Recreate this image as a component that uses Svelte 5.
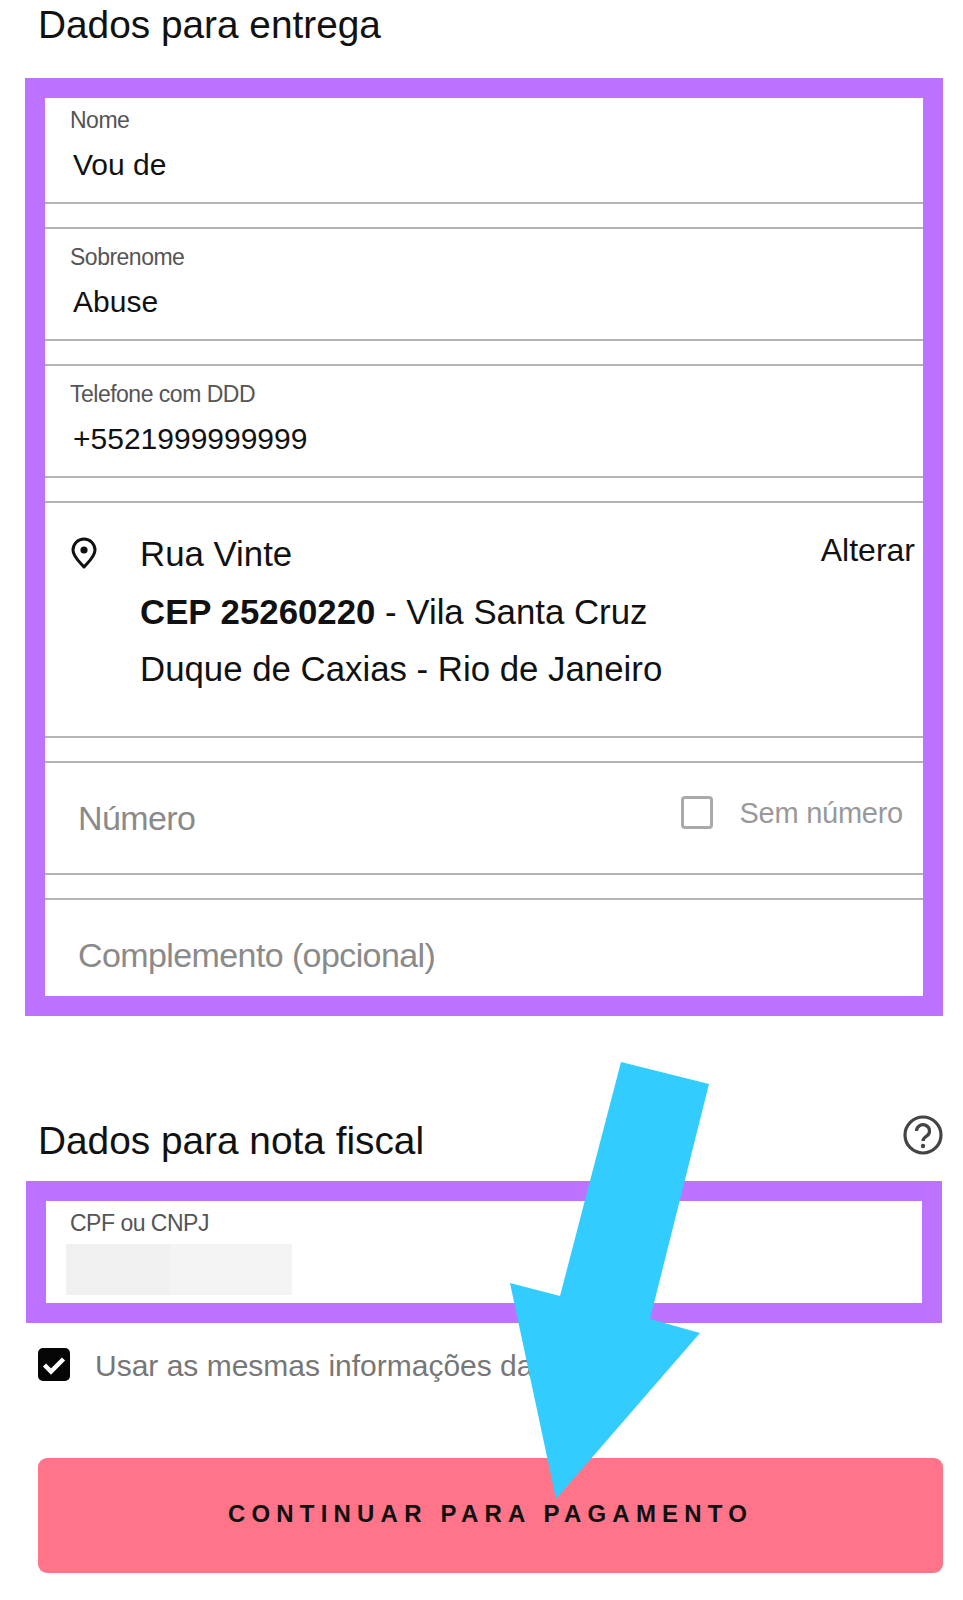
<script>
    const fields = [
        { label: "Nome", value: "Vou de" },
        { label: "Sobrenome", value: "Abuse" },
        { label: "Telefone com DDD", value: "+5521999999999" }
    ];
</script>

<div class="page">
    <h2 class="title">Dados para entrega</h2>

    <div class="box delivery">
        {#each fields as f, i}
            <div class="field" class:first={i === 0}>
                <span class="label">{f.label}</span>
                <span class="value">{f.value}</span>
            </div>
        {/each}

        <div class="field address">
            <svg class="pin" viewBox="0 0 26 32" width="26" height="32">
                <path d="M13 30 C9 25 2 20 2 13 A11 11 0 0 1 24 13 C24 20 17 25 13 30 Z" fill="none" stroke="#111" stroke-width="3" stroke-linejoin="round" />
                <circle cx="13" cy="13" r="3.6" fill="#111" />
            </svg>
            <div class="lines">
                <div>Rua Vinte</div>
                <div><b>CEP 25260220</b> - Vila Santa Cruz</div>
                <div>Duque de Caxias - Rio de Janeiro</div>
            </div>
            <span class="change">Alterar</span>
        </div>

        <div class="field number">
            <span class="placeholder">Número</span>
            <div class="no-number">
                <span class="empty-check"></span>
                <span>Sem número</span>
            </div>
        </div>

        <div class="field last">
            <span class="placeholder">Complemento (opcional)</span>
        </div>
    </div>

    <div class="fiscal-head">
        <h2 class="title">Dados para nota fiscal</h2>
        <svg class="help" viewBox="0 0 40 40" width="40" height="40">
            <circle cx="20" cy="20" r="18" fill="none" stroke="#444" stroke-width="3.2" />
            <path d="M13.5 16 A6.5 6.2 0 1 1 23.5 21.2 C21 22.8 20 23.6 20 26" fill="none" stroke="#444" stroke-width="3.2" />
            <circle cx="20" cy="31" r="2.2" fill="#444" />
        </svg>
    </div>

    <div class="box cpf">
        <span class="label">CPF ou CNPJ</span>
        <div class="redacted">
            <span class="shade-a"></span>
            <span class="shade-b"></span>
        </div>
    </div>

    <div class="same">
        <svg class="check" viewBox="0 0 32 33" width="32" height="33">
            <rect width="32" height="33" rx="5" fill="#050505" />
            <path d="M6.5 17 L13 23.5 L25.5 11" fill="none" stroke="#fff" stroke-width="4.5" />
        </svg>
        <span>Usar as mesmas informações da</span>
    </div>

    <button class="continue">CONTINUAR PARA PAGAMENTO</button>

    <svg class="arrow" viewBox="0 0 963 1600" width="963" height="1600">
        <polygon points="621,1062 709,1084 650,1319 700,1333 556,1499 510,1283 560,1296" fill="#33ccff" />
    </svg>
</div>

<style>
    :global(body) {
        margin: 0;
        background: #fff;
    }

    .page {
        position: relative;
        width: 963px;
        height: 1600px;
        overflow: hidden;
        font-family: "Liberation Sans", Arial, sans-serif;
        color: #111;
    }

    .title {
        margin: 0;
        padding: 2px 0 0 38px;
        font-size: 38.8px;
        line-height: 46px;
        font-weight: 400;
        color: #111;
    }

    .box {
        box-sizing: border-box;
        border: 20px solid #bd73ff;
    }

    .delivery {
        width: 918px;
        height: 938px;
        margin: 30px 0 0 25px;
        display: flex;
        flex-direction: column;
        gap: 23px;
        overflow: hidden;
    }

    .field {
        box-sizing: border-box;
        height: 114px;
        flex: none;
        display: flex;
        flex-direction: column;
        padding: 15px 0 0 25px;
        border-top: 2px solid #b4b4b4;
        border-bottom: 2px solid #b4b4b4;
    }

    .field.first {
        height: 106px;
        padding-top: 9px;
        border-top: 0;
    }

    .field.last {
        border-bottom: 0;
        height: 98px;
        padding: 33px 0 0 33px;
    }

    .label {
        font-size: 23px;
        line-height: 26px;
        letter-spacing: -0.5px;
        color: #555;
    }

    .value {
        margin: 14px 0 0 3px;
        font-size: 30px;
        line-height: 36px;
        color: #111;
    }

    .address {
        height: 237px;
        flex-direction: row;
        align-items: flex-start;
        padding: 34px 8px 0 26px;
    }

    .pin {
        flex: none;
    }

    .lines {
        flex: 1;
        margin: -12px 0 0 43px;
        font-size: 34.8px;
        line-height: 57.6px;
        color: #111;
    }

    .change {
        font-size: 32px;
        line-height: 36px;
        margin-top: -5px;
    }

    .number {
        flex-direction: row;
        justify-content: space-between;
        padding: 33px 20px 0 33px;
    }

    .placeholder {
        font-size: 34px;
        line-height: 44px;
        letter-spacing: -0.6px;
        color: #8a8a8a;
    }

    .no-number {
        display: flex;
        align-items: center;
        gap: 26px;
        height: 33px;
        font-size: 29px;
        letter-spacing: -0.25px;
        color: #999;
    }

    .no-number span:last-child {
        padding-top: 2px;
    }

    .empty-check {
        box-sizing: border-box;
        width: 32px;
        height: 33px;
        border: 3px solid #aaa;
        border-radius: 4px;
    }

    .fiscal-head {
        display: flex;
        justify-content: space-between;
        align-items: flex-start;
        margin-top: 97px;
        padding-right: 20px;
        height: 68px;
    }

    .fiscal-head .title {
        padding-top: 5px;
    }

    .help {
        margin-top: 2px;
    }

    .cpf {
        width: 916px;
        height: 142px;
        margin-left: 26px;
        padding: 9px 20px 0 24px;
    }

    .cpf .label {
        display: block;
    }

    .redacted {
        display: flex;
        height: 51px;
        margin: 8px 0 0 -4px;
    }

    .shade-a {
        width: 104px;
        background: #f0f0f0;
    }

    .shade-b {
        width: 122px;
        background: #f4f4f4;
    }

    .same {
        display: flex;
        align-items: center;
        gap: 25px;
        height: 33px;
        margin: 25px 0 0 38px;
        font-size: 30px;
        color: #777;
    }

    .same span {
        padding-top: 2px;
    }

    .check {
        flex: none;
    }

    .continue {
        display: block;
        width: 905px;
        height: 115px;
        margin: 77px 0 0 38px;
        border: 0;
        border-radius: 9px;
        background: #ff7489;
        color: #111;
        font-family: inherit;
        font-size: 24px;
        font-weight: 700;
        letter-spacing: 6.2px;
        padding: 0 0 4px;
    }

    .arrow {
        position: absolute;
        left: 0;
        top: 0;
        pointer-events: none;
    }
</style>
